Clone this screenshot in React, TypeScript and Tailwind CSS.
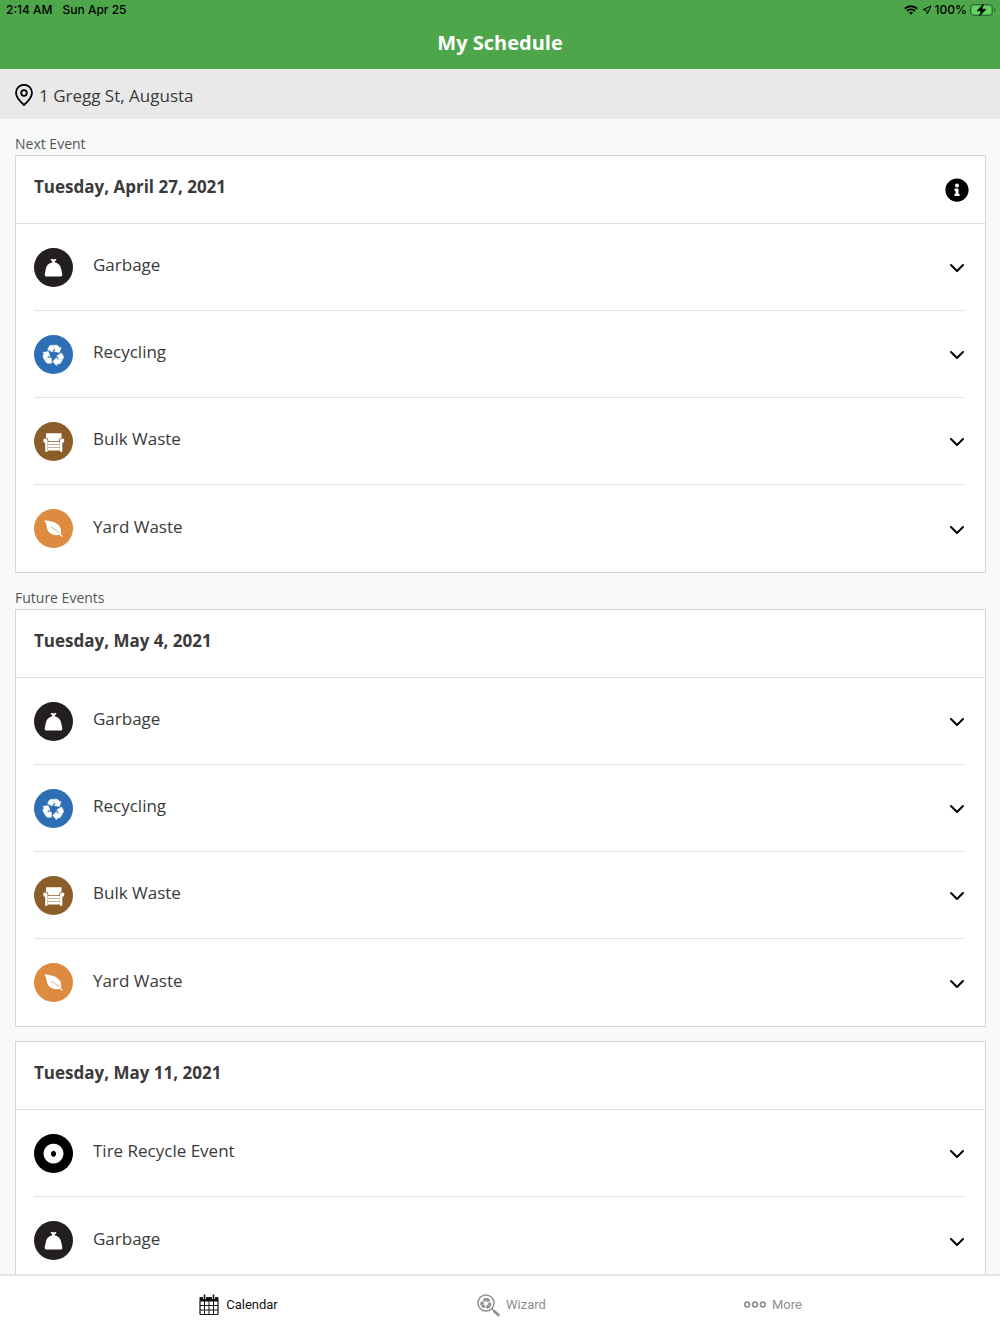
import { useState } from 'react';
import { FaInfoCircle } from 'react-icons/fa';

type Kind = 'garbage' | 'recycling' | 'bulk' | 'yard' | 'tire';

const KINDS: Record<Kind, { label: string; color: string }> = {
  garbage: { label: 'Garbage', color: 'bg-[#231f20]' },
  recycling: { label: 'Recycling', color: 'bg-[#2e6eb5]' },
  bulk: { label: 'Bulk Waste', color: 'bg-[#8b5d28]' },
  yard: { label: 'Yard Waste', color: 'bg-[#dc8b40]' },
  tire: { label: 'Tire Recycle Event', color: 'bg-black' },
};

const WEEKLY: Kind[] = ['garbage', 'recycling', 'bulk', 'yard'];

// three bent arrows around the origin, radius about 10
const RecycleArrows = () => (
  <>
    {[0, 120, 240].map((angle) => (
      <g key={angle} transform={`rotate(${angle})`} stroke="currentColor" strokeWidth=".5" strokeLinejoin="round">
        <path d="M-5.900-5.800L-4.100-8.900Q-3.400-10-2.200-10L-.9-9.800.7-6.800-1.400-3.300z" />
        <path d="M-.5-10H3.200Q4.400-10 5-8.900L6-7.200 7.600-8 5.900-2.600.5-3.800 2-4.800z" />
      </g>
    ))}
  </>
);

const KindGlyph = ({ kind }: { kind: Kind }) => (
  <svg viewBox="0 0 39 39" className="w-[39px] h-[39px]" fill="currentColor">
    {kind === 'garbage' && (
      <path d="M16.800 10.700l1.400.5h2.600l1.400-.5v1.600l-1.400.9v1.100c3.600 1 6 3.400 6.500 7.200.2 1.900 1.200 4.100.9 5.700-.2 1-.9 1.400-1.800 1.400H12.600c-.9 0-1.600-.4-1.800-1.400-.3-1.600.7-3.800.9-5.700.5-3.800 2.900-6.200 6.500-7.200v-1.100l-1.400-.9z" />
    )}
    {kind === 'recycling' && (
      <g transform="translate(19.500 20.200)">
        <RecycleArrows />
      </g>
    )}
    {kind === 'bulk' && (
      <>
        <path d="M12 11.200h15.500v4.600c-1.500.3-2.500 1.500-2.500 3.500H14.500c0-2-1-3.200-2.500-3.500z" />
        <path d="M9.200 18.200c0-1 .8-1.700 2-1.700s2.400.7 2.400 2.100v11.200h-2.400v-8.600c-1.200-.6-2-1.700-2-3zM30.300 18.200c0-1-.8-1.700-2-1.700s-2.400.7-2.400 2.100v11.200h2.400v-8.600c1.200-.6 2-1.700 2-3z" />
        <path d="M13.800 19.900h12v2.500h-12zM13.800 22.900h12v2.400h-12zM13.800 25.800h12v2.700h-12z" />
      </>
    )}
    {kind === 'yard' && (
      <>
        <path d="M10.300 11.400c5.500.2 11 1.200 14.400 4.900 2.500 2.700 2.900 5.800 2.200 9.300-4.900 1.400-9.600.6-12.200-2.800-2.500-3.200-1.600-8-4.400-11.400z" />
        <path d="M17 18c3.700 2.200 6.500 4.400 9.300 7" stroke="#dc8b40" strokeWidth=".7" fill="none" />
        <path d="M25 24.400l3.500 3.200" stroke="currentColor" strokeWidth="1.200" fill="none" />
      </>
    )}
    {kind === 'tire' && (
      <path
        fillRule="evenodd"
        d="M19.500 9.700a10 9.900 0 1 0 .01 0zM19.500 16.700a2.500 3 0 1 1-.01 0z"
      />
    )}
  </svg>
);

const EventRow = ({ kind }: { kind: Kind }) => {
  const [open, setOpen] = useState(false);
  const { label, color } = KINDS[kind];

  return (
    <li className="h-[87px] border-b border-[#e2e2e2] last:border-b-0">
      <button
        type="button"
        aria-expanded={open}
        onClick={() => setOpen(!open)}
        className="flex h-full w-full items-center text-left"
      >
        <span className={`flex size-[39px] shrink-0 items-center justify-center rounded-full text-white ${color}`}>
          <KindGlyph kind={kind} />
        </span>
        <span className="ml-5 flex-1 pb-1 text-[17px] leading-6">{label}</span>
        <svg
          viewBox="0 0 16 10"
          className={`mt-0.5 w-4 text-black ${open ? 'rotate-180' : ''}`}
          fill="none"
          stroke="currentColor"
          strokeWidth="2"
          strokeLinecap="round"
          strokeLinejoin="round"
        >
          <path d="M2 2l6 6 6-6" />
        </svg>
      </button>
    </li>
  );
};

const EventCard = ({ date, kinds, info }: { date: string; kinds: Kind[]; info?: boolean }) => (
  <article className="border border-[#d3d6d5] bg-white">
    <header className="flex h-[68px] items-center justify-between border-b border-[#dcdcdc] pl-[18px] pr-4">
      <h3 className="pb-1.5 text-[17px] font-bold leading-6">{date}</h3>
      {info && (
        <button type="button" aria-label="Information" className="text-black">
          <FaInfoCircle className="size-6" />
        </button>
      )}
    </header>
    <ul className="pl-[18px] pr-5">
      {kinds.map((kind) => (
        <EventRow key={kind} kind={kind} />
      ))}
    </ul>
  </article>
);

const StatusBar = () => (
  <div className="flex h-5 items-center justify-between pl-1.5 pr-1 font-[Inter,sans-serif] text-[12px] font-medium text-black">
    <div className="flex gap-2.5">
      <span>2:14 AM</span>
      <span>Sun Apr 25</span>
    </div>
    <div className="flex items-center gap-[3px]">
      <svg viewBox="0 0 14 10" className="mr-px w-3.5" fill="none" stroke="currentColor" strokeWidth="1.900">
        <path d="M.9 3.700a8.700 8.700 0 0 1 12.200 0M3.100 6a5.600 5.600 0 0 1 7.800 0" />
        <path d="M7 9.800L4.900 7.700a3 3 0 0 1 4.200 0z" fill="currentColor" stroke="none" />
      </svg>
      <svg viewBox="0 0 10 10" className="w-2.5" fill="none" stroke="currentColor" strokeLinejoin="round">
        <path d="M9 1L1 4.700l3.700.6L5.300 9z" />
      </svg>
      <span>100%</span>
      <svg viewBox="0 0 26 12" className="w-[26px]" fill="none">
        <rect x=".5" y=".5" width="22" height="11" rx="3" stroke="#2f7034" />
        <rect x="2" y="2" width="19" height="8" rx="1.800" fill="#64d466" />
        <path d="M24 4v4c.9-.3 1.500-1.100 1.500-2S24.900 4.300 24 4z" fill="#2f7034" />
        <path d="M13.500 0L7 6.800h4L9.500 12 16 5.200h-4z" fill="#000" stroke="#000" strokeWidth=".6" />
      </svg>
    </div>
  </div>
);

const TabBar = () => (
  <nav className="grid shrink-0 grid-cols-[477fr_69fr_454fr] border-t-2 border-[#e4e4e4] bg-white font-[Roboto,sans-serif] text-[13px] text-[#8e8e8e]">
    <a href="#calendar" aria-current="page" className="flex h-[58px] items-center justify-center gap-[7px] text-[#111]">
      <svg viewBox="0 0 20 22" className="w-5" fill="none" stroke="currentColor">
        <path d="M1 3.500h18V7H1z" fill="currentColor" />
        <path d="M1 7v12.500c0 .6.400 1 1 1h16c.6 0 1-.4 1-1V7" strokeWidth="1.200" />
        <path d="M1 11.500h18M1 16h18M5.500 7v13.500M10 7v13.500M14.500 7v13.500" />
        <path d="M5.500 1v4M14.500 1v4" stroke="#fff" strokeWidth="3.200" />
        <path d="M5.500 .5v4.500M14.500 .5v4.500" strokeWidth="1.600" />
      </svg>
      Calendar
    </a>
    <a href="#wizard" className="flex h-[58px] items-center justify-center gap-1.5">
      <svg viewBox="0 0 23 23" className="w-[23px] shrink-0" fill="none" stroke="currentColor">
        <circle cx="9" cy="9" r="8" strokeWidth="1.500" />
        <path d="M15 15l1.500 1.500" strokeWidth="1.300" />
        <path d="M17.300 17.300l4 3.700" strokeWidth="2.700" strokeLinecap="round" />
        <g transform="translate(9 9.400) scale(.53)" fill="currentColor" stroke="none">
          <RecycleArrows />
        </g>
      </svg>
      Wizard
    </a>
    <a href="#more" className="flex h-[58px] items-center justify-center gap-1.5">
      <svg viewBox="0 0 22 8" className="w-[22px]" fill="none" stroke="currentColor" strokeWidth="1.600">
        <circle cx="3.200" cy="3.500" r="2.400" />
        <circle cx="11" cy="3.500" r="2.400" />
        <circle cx="18.800" cy="3.500" r="2.400" />
      </svg>
      More
    </a>
  </nav>
);

const App = () => {
  return (
    <div className="flex h-screen flex-col bg-[#f8faf9] font-['Open_Sans',sans-serif] text-[#3a3a3a]">
      <header className="shrink-0 bg-[#4ea64a]">
        <StatusBar />
        <h1 className="pb-2.5 pt-[7px] text-center text-[20px] font-bold leading-8 text-white">My Schedule</h1>
      </header>

      <div className="flex h-[50px] shrink-0 items-center gap-1.5 bg-[#e9e9e9] px-[15px]">
        <svg viewBox="0 0 18 22" className="mt-0.5 w-[18px] text-black" fill="none" stroke="currentColor" strokeWidth="1.800">
          <path d="M9 21C5.200 17.700 1 13.200 1 8.800a8 8 0 0 1 16 0C17 13.200 12.800 17.700 9 21z" />
          <circle cx="9" cy="9" r="2.800" />
        </svg>
        <p className="pt-1 text-[17px] font-medium leading-6">1 Gregg St, Augusta</p>
      </div>

      <main className="min-h-0 flex-1 overflow-y-auto pl-[15px] pr-3.5 [scrollbar-width:none]">
        <section>
          <h2 className="h-9 pt-3.5 text-[14px] leading-[22px] text-[#555]">Next Event</h2>
          <EventCard date="Tuesday, April 27, 2021" kinds={WEEKLY} info />
        </section>
        <section>
          <h2 className="h-9 pt-3.5 text-[14px] leading-[22px] text-[#555]">Future Events</h2>
          <div className="flex flex-col gap-3.5">
            <EventCard date="Tuesday, May 4, 2021" kinds={WEEKLY} />
            <EventCard date="Tuesday, May 11, 2021" kinds={['tire', 'garbage']} />
          </div>
        </section>
      </main>

      <TabBar />
    </div>
  );
};

export default App;
